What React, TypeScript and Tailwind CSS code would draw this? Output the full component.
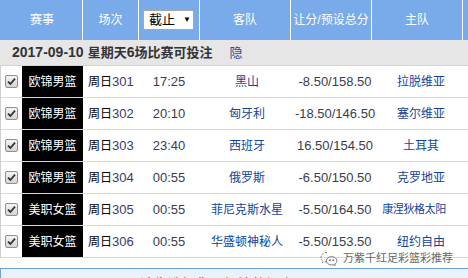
import React from 'react';

// ─── Data ─────────────────────────────────────────────────────────────────────

interface Match {
  league: string;
  day: string;
  num: string;
  time: string;
  away: string;
  line: string;
  home: string;
  tight?: boolean;
}

const MATCHES: Match[] = [
  { league: '欧锦男篮', day: '周日', num: '301', time: '17:25', away: '黑山', line: '-8.50/158.50', home: '拉脱维亚' },
  { league: '欧锦男篮', day: '周日', num: '302', time: '20:10', away: '匈牙利', line: '-18.50/146.50', home: '塞尔维亚' },
  { league: '欧锦男篮', day: '周日', num: '303', time: '23:40', away: '西班牙', line: '16.50/154.50', home: '土耳其' },
  { league: '欧锦男篮', day: '周日', num: '304', time: '00:55', away: '俄罗斯', line: '-6.50/150.50', home: '克罗地亚' },
  { league: '美职女篮', day: '周日', num: '305', time: '00:55', away: '菲尼克斯水星', line: '-5.50/164.50', home: '康涅狄格太阳', tight: true },
  { league: '美职女篮', day: '周日', num: '306', time: '00:55', away: '华盛顿神秘人', line: '-5.50/153.50', home: '纽约自由' },
];

// ─── Pieces ───────────────────────────────────────────────────────────────────

const Checkbox: React.FC = () => (
  <div className="w-[13px] h-[13px] rounded-[2px] border border-[#8f8f8f] bg-gradient-to-b from-[#f4f4f4] to-[#d4d4d4] flex items-center justify-center">
    <svg width="9" height="9" viewBox="0 0 9 9">
      <path d="M1 4.6 L3.4 7 L8 1.6" fill="none" stroke="#333" strokeWidth="1.8" />
    </svg>
  </div>
);

const WeChatMark: React.FC = () => (
  <svg width="18" height="15" viewBox="0 0 18 15" fill="none" stroke="#777" strokeWidth="1">
    <path d="M7 1.5 C3.6 1.5 1 3.6 1 6.2 C1 7.7 1.8 9 3.1 9.8 L2.6 11.6 L4.6 10.6 C5.4 10.8 6.2 10.9 7 10.9" strokeDasharray="2 1.4" />
    <path d="M11.6 5.6 C8.7 5.6 6.4 7.5 6.4 9.8 C6.4 12.1 8.7 14 11.6 14 C12.2 14 12.8 13.9 13.4 13.7 L15.2 14.5 L14.8 13 C16.1 12.2 16.9 11.1 16.9 9.8 C16.9 7.5 14.6 5.6 11.6 5.6 Z" />
    <circle cx="10" cy="9.2" r="0.6" fill="#777" />
    <circle cx="13.3" cy="9.2" r="0.6" fill="#777" />
  </svg>
);

// ─── Component ────────────────────────────────────────────────────────────────

export default function App() {
  return (
    <div className="w-[468px] h-[278px] overflow-hidden bg-white relative font-['Liberation_Sans','Noto_Sans_CJK_SC',sans-serif]">
      {/* Header */}
      <div className="flex h-[40px] bg-[#79aaea] text-white text-[12px] whitespace-nowrap">
        <div className="w-[83px] shrink-0 border-r border-white flex items-center justify-center pl-[2px]">赛事</div>
        <div className="w-[56px] shrink-0 border-r border-white flex items-center justify-center">场次</div>
        <div className="w-[61px] shrink-0 border-r border-white flex items-center pl-[4px]">
          <div className="w-[51px] h-[20px] bg-white border border-[#a8a8a8] flex items-center pl-[5px] gap-[8px] text-black text-[13px]">
            <span>截止</span>
            <span className="text-[8px]">▼</span>
          </div>
        </div>
        <div className="w-[91px] shrink-0 border-r border-white flex items-center justify-center">客队</div>
        <div className="w-[81px] shrink-0 border-r border-white flex items-center justify-center">让分/预设总分</div>
        <div className="w-[91px] shrink-0 border-r border-white flex items-center justify-center">主队</div>
        <div className="flex-1" />
      </div>

      {/* Date bar */}
      <div className="h-[26px] bg-[#e6e6e6] border-b border-[#d4d4d4] flex items-center pl-[12px] whitespace-nowrap font-bold text-[#333]">
        <span className="text-[14px]">2017-09-10</span>
        <span className="text-[13px] ml-[4px]">星期天<span className="text-[14px]">6</span>场比赛可投注</span>
        <span className="ml-[17px] text-[13px] font-normal text-[#1d4c9c]">隐</span>
      </div>

      {/* Rows */}
      <div className="border-l border-[#cfcfcf]">
        {MATCHES.map(m => (
          <div key={m.num} className="flex h-[32px] border-b border-[#d9d9d9] text-[12px] whitespace-nowrap">
            <div className="w-[21px] shrink-0 flex items-center pl-[4px]">
              <Checkbox />
            </div>
            <div className="w-[61px] shrink-0 bg-black text-white flex items-center justify-center">{m.league}</div>
            <div className="w-[57px] shrink-0 flex items-center pl-[5px] text-black">
              {m.day}<span className="text-[13px] text-[#3a3a72]">{m.num}</span>
            </div>
            <div className="w-[61px] shrink-0 flex items-center justify-center text-[13px] text-[#3c3c4c] pr-[3px]">{m.time}</div>
            <div className="w-[92px] shrink-0 flex items-center justify-center text-[#12449a]">{m.away}</div>
            <div className="w-[82px] shrink-0 flex items-center justify-center text-[13px] text-[#3c3c4c] pl-[2px]">{m.line}</div>
            <div className={`w-[92px] shrink-0 flex items-center justify-center text-[#12449a] ${m.tight ? 'text-[11px] tracking-[-0.4px] pr-[14px]' : ''}`}>{m.home}</div>
            <div className="flex-1 flex items-center pl-[2px] text-[#12449a] overflow-hidden">欧</div>
          </div>
        ))}
      </div>

      {/* Bottom notice */}
      <div className="mt-[10px] border-t border-l border-[#6ea1d6] bg-[#e9f1fb] h-[20px] pt-[5px] pl-[139px] text-[14px] text-[#ff0000] whitespace-nowrap">
        请先选择您要投注的场次
      </div>

      {/* Watermark */}
      <div className="absolute left-[320px] top-[250px] flex items-center gap-[5px] text-[11px] text-[#666] [text-shadow:0_0_2px_#fff,0_0_2px_#fff] whitespace-nowrap">
        <WeChatMark />
        <span>万紫千红足彩篮彩推荐</span>
      </div>
    </div>
  );
}
